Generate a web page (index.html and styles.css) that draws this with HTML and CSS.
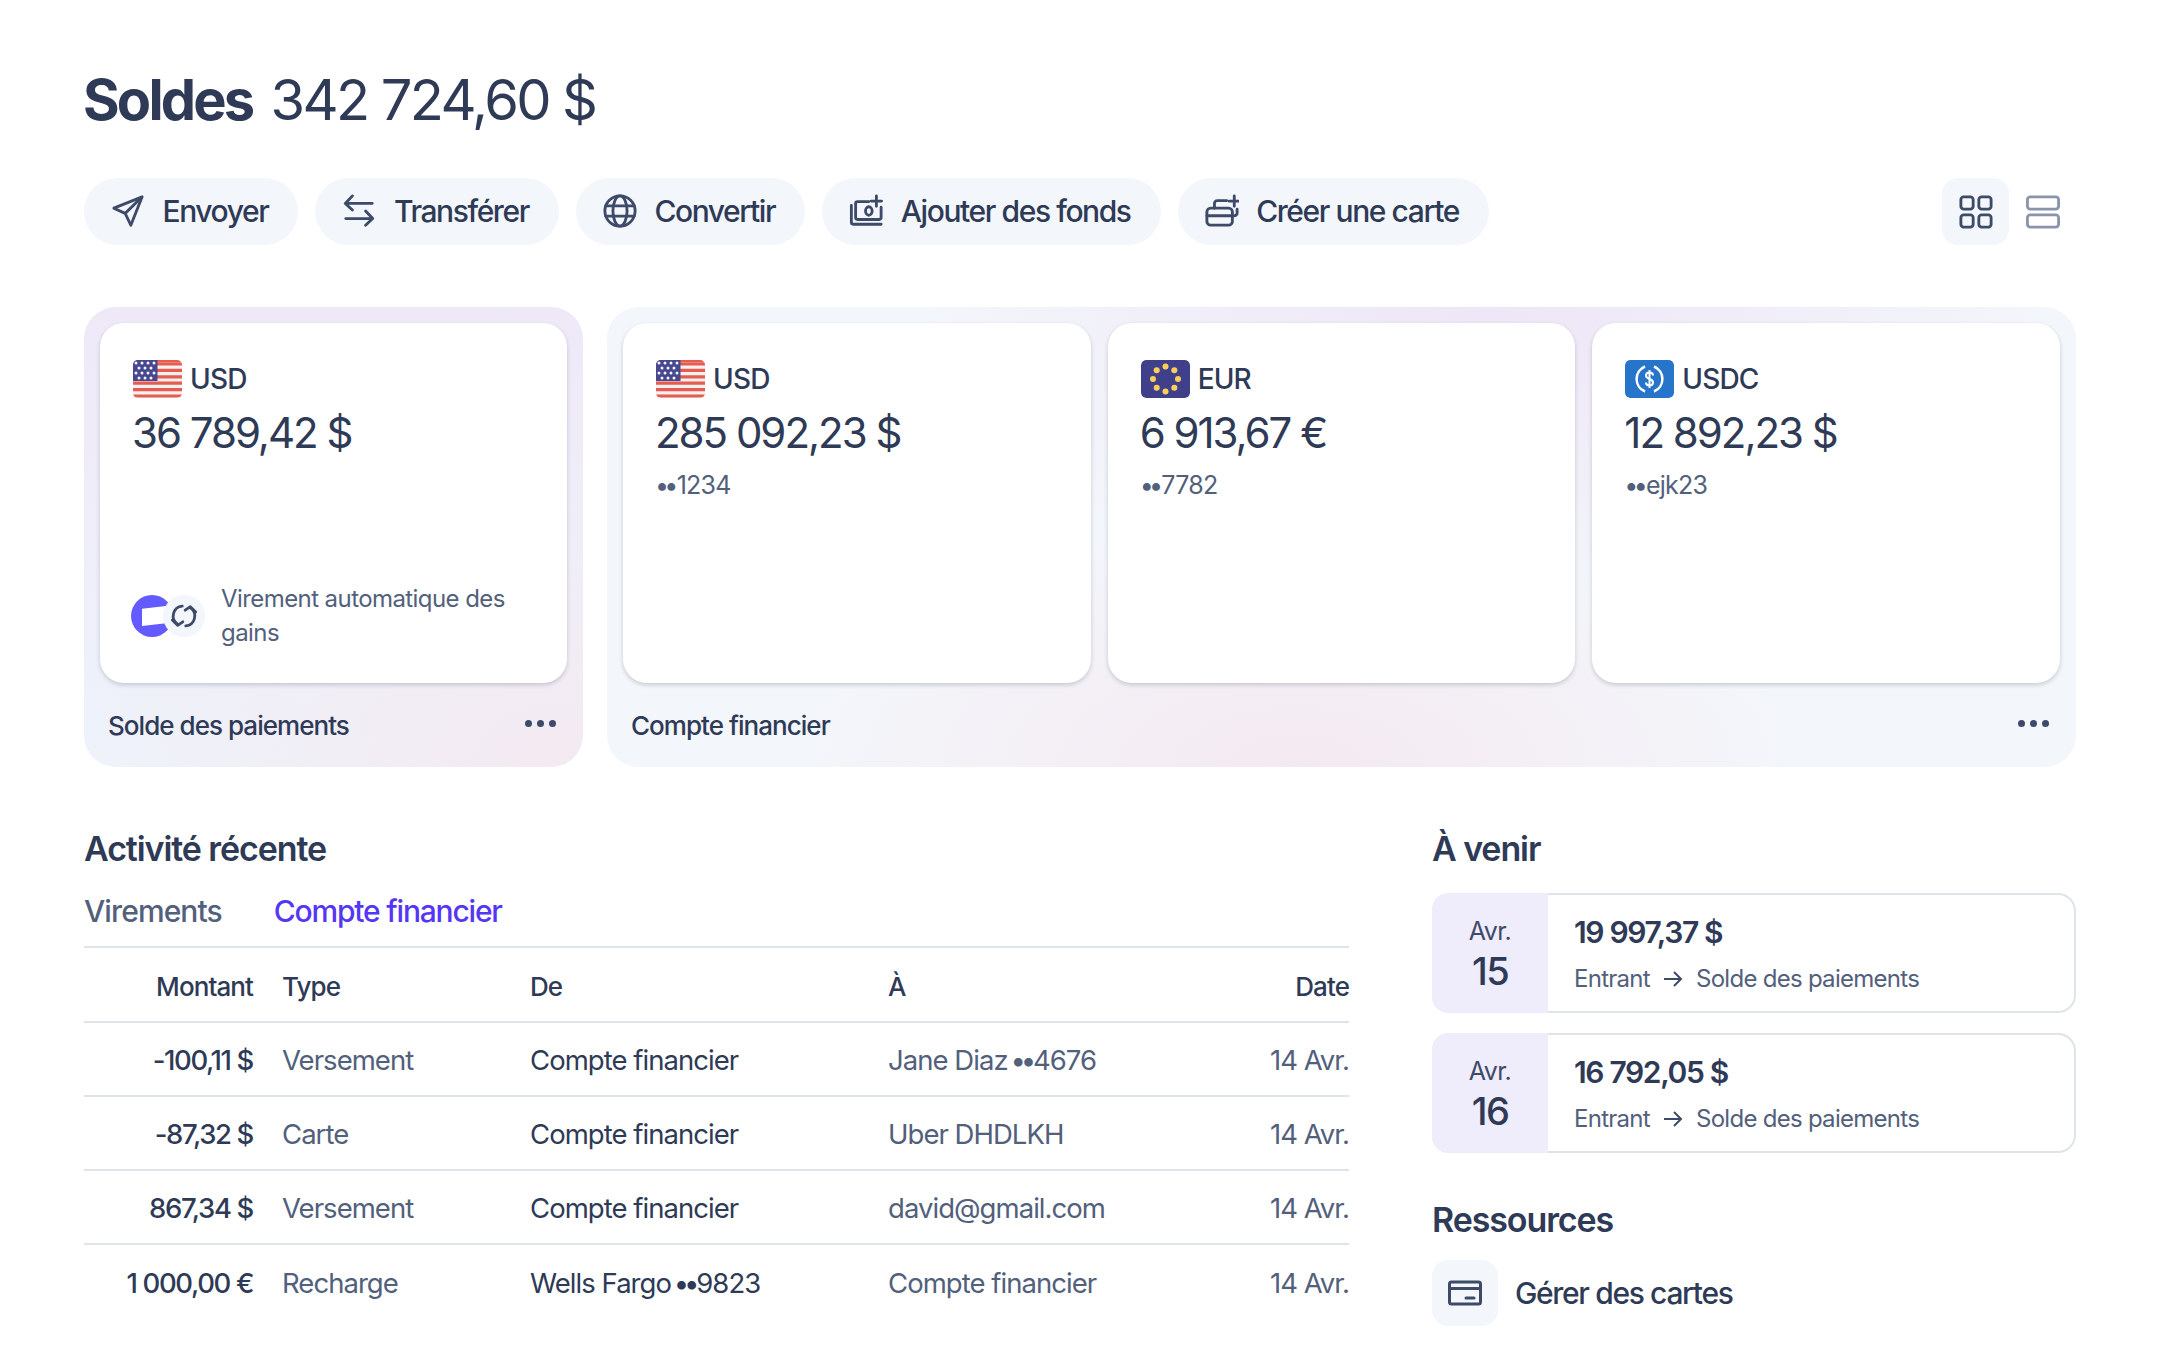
FILE: index.html
```html
<!DOCTYPE html>
<html lang="fr">
<head>
    <meta charset="UTF-8">
    <meta name="viewport" content="width=device-width, initial-scale=1.0">
    <title>Soldes</title>
    <link rel="stylesheet" href="styles.css">
</head>
<body>
    <svg class="sprites" width="0" height="0">
        <symbol id="flag-us" viewBox="0 0 49 38">
            <rect width="49" height="38" fill="#f1f1f3"/>
            <path d="M0 0h49v3.200H0zM0 6.400h49v3.200H0zM0 12.800h49v3.200H0zM0 19.200h49v3.200H0zM0 25.600h49v3.200H0zM0 32h49v3.200H0z" fill="#e85c50" transform="translate(0 2.400)"/>
            <path d="M0 0h49v2.400H0z" fill="#e85c50"/>
            <rect width="24.500" height="21" fill="#47478f"/>
            <g fill="#f4f4f8">
                <circle cx="3" cy="3" r="1.500"/><circle cx="9" cy="3" r="1.500"/><circle cx="15" cy="3" r="1.500"/><circle cx="21" cy="3" r="1.500"/>
                <circle cx="6" cy="8" r="1.500"/><circle cx="12" cy="8" r="1.500"/><circle cx="18" cy="8" r="1.500"/>
                <circle cx="3" cy="13" r="1.500"/><circle cx="9" cy="13" r="1.500"/><circle cx="15" cy="13" r="1.500"/><circle cx="21" cy="13" r="1.500"/>
                <circle cx="6" cy="18" r="1.500"/><circle cx="12" cy="18" r="1.500"/><circle cx="18" cy="18" r="1.500"/>
            </g>
        </symbol>
    </svg>

    <div class="page">
        <h1 class="title"><strong>Soldes</strong> <span>342 724,60 $</span></h1>

        <div class="toolbar">
            <button class="pill" type="button">
                <svg class="icon" viewBox="0 0 36 36"><path d="M33 3 3 15l12 5.500L21 33z M33 3 15 20.500"/></svg>
                Envoyer
            </button>
            <button class="pill" type="button">
                <svg class="icon" viewBox="0 0 36 36"><path d="M32 10H4M11 2 3.500 10l7.500 7M4 26h28M25 18l7.500 8-7.500 7"/></svg>
                Transférer
            </button>
            <button class="pill" type="button">
                <svg class="icon" viewBox="0 0 36 36"><circle cx="18" cy="18" r="16"/><ellipse cx="18" cy="18" rx="7.500" ry="16"/><path d="M3 12.500h30M3 23.500h30"/></svg>
                Convertir
            </button>
            <button class="pill" type="button">
                <svg class="icon" viewBox="0 0 36 36"><path d="M21 8H9a2 2 0 0 0-2 2v15a2 2 0 0 0 2 2h23a2 2 0 0 0 2-2V14"/><path d="M2.500 12v18a2 2 0 0 0 2 2H34"/><ellipse cx="21" cy="18" rx="3.500" ry="4.500"/><path d="M29 2v11M23.500 7.500h11"/></svg>
                Ajouter des fonds
            </button>
            <button class="pill" type="button">
                <svg class="icon" viewBox="0 0 36 36"><rect x="2" y="15" width="27" height="18" rx="4"/><path d="M2 23h27M10 15v-5a3 3 0 0 1 3-3h10M34 16v4a3 3 0 0 1-3 3M31 2v11M25.500 7.500h10"/></svg>
                Créer une carte
            </button>
            <div class="view-toggle">
                <button class="view-btn view-btn-active" type="button">
                    <svg class="icon" viewBox="0 0 36 36"><rect x="2" y="2" width="13" height="13" rx="3"/><rect x="21" y="2" width="13" height="13" rx="3"/><rect x="2" y="21" width="13" height="13" rx="3"/><rect x="21" y="21" width="13" height="13" rx="3"/></svg>
                </button>
                <button class="view-btn" type="button">
                    <svg class="icon icon-muted" viewBox="0 0 36 36"><rect x="1.500" y="2" width="33" height="13" rx="3"/><rect x="1.500" y="21" width="33" height="13" rx="3"/></svg>
                </button>
            </div>
        </div>

        <div class="balances">
            <section class="panel panel-payments">
                <div class="cards">
                    <div class="card">
                        <div class="currency">
                            <svg class="flag"><use href="#flag-us"/></svg>
                            USD
                        </div>
                        <div class="amount">36 789,42 $</div>
                        <div class="auto">
                            <div class="auto-icons">
                                <span class="brand"><span class="brand-mark"></span></span>
                                <span class="sync">
                                    <svg class="icon" viewBox="0 0 24 24"><path d="M10.500 3.500A8.500 8.500 0 0 0 6.500 19M2 15.500 6.500 20l4.500-3M13.500 20.500A8.500 8.500 0 0 0 17.500 5M22 8.500 17.500 4 13 7"/></svg>
                                </span>
                            </div>
                            <p>Virement automatique des gains</p>
                        </div>
                    </div>
                </div>
                <div class="panel-foot">
                    <span>Solde des paiements</span>
                    <span class="dots"><i></i><i></i><i></i></span>
                </div>
            </section>

            <section class="panel panel-financial">
                <div class="cards">
                    <div class="card">
                        <div class="currency">
                            <svg class="flag"><use href="#flag-us"/></svg>
                            USD
                        </div>
                        <div class="amount">285 092,23 $</div>
                        <div class="acct"><span class="mask">••</span>1234</div>
                    </div>
                    <div class="card">
                        <div class="currency">
                            <svg class="flag" viewBox="0 0 49 38">
                                <rect width="49" height="38" rx="5" fill="#40408a"/>
                                <g fill="#fbcf5a">
                                    <circle cx="24.500" cy="6.500" r="3"/><circle cx="33.300" cy="10.200" r="3"/><circle cx="37" cy="19" r="3"/><circle cx="33.300" cy="27.800" r="3"/>
                                    <circle cx="24.500" cy="31.500" r="3"/><circle cx="15.700" cy="27.800" r="3"/><circle cx="12" cy="19" r="3"/><circle cx="15.700" cy="10.200" r="3"/>
                                </g>
                            </svg>
                            EUR
                        </div>
                        <div class="amount">6 913,67 €</div>
                        <div class="acct"><span class="mask">••</span>7782</div>
                    </div>
                    <div class="card">
                        <div class="currency">
                            <svg class="flag" viewBox="0 0 49 38">
                                <rect width="49" height="38" rx="5" fill="#2775ca"/>
                                <path d="M20 6.500a13.500 13.500 0 0 0 0 25M29 6.500a13.500 13.500 0 0 1 0 25" fill="none" stroke="#fff" stroke-width="2.500"/>
                                <path d="M28 15.500c0-2-1.500-3-3.500-3s-3.500 1-3.500 3 1.500 2.800 3.500 3.500 3.500 1.500 3.500 3.500-1.500 3-3.500 3-3.500-1-3.500-3M24.500 10v18" fill="none" stroke="#fff" stroke-width="2"/>
                            </svg>
                            USDC
                        </div>
                        <div class="amount">12 892,23 $</div>
                        <div class="acct"><span class="mask">••</span>ejk23</div>
                    </div>
                </div>
                <div class="panel-foot">
                    <span>Compte financier</span>
                    <span class="dots"><i></i><i></i><i></i></span>
                </div>
            </section>
        </div>

        <div class="lower">
            <section class="activity">
                <h2>Activité récente</h2>
                <div class="tabs">
                    <span class="tab">Virements</span>
                    <span class="tab tab-active">Compte financier</span>
                </div>
                <table>
                    <thead>
                        <tr>
                            <th class="col-amount">Montant</th>
                            <th class="col-type">Type</th>
                            <th class="col-from">De</th>
                            <th class="col-to">À</th>
                            <th class="col-date">Date</th>
                        </tr>
                    </thead>
                    <tbody>
                        <tr>
                            <td class="col-amount">-100,11 $</td>
                            <td class="col-type">Versement</td>
                            <td class="col-from">Compte financier</td>
                            <td class="col-to">Jane Diaz <span class="mask">••</span>4676</td>
                            <td class="col-date">14 Avr.</td>
                        </tr>
                        <tr>
                            <td class="col-amount">-87,32 $</td>
                            <td class="col-type">Carte</td>
                            <td class="col-from">Compte financier</td>
                            <td class="col-to">Uber DHDLKH</td>
                            <td class="col-date">14 Avr.</td>
                        </tr>
                        <tr>
                            <td class="col-amount">867,34 $</td>
                            <td class="col-type">Versement</td>
                            <td class="col-from">Compte financier</td>
                            <td class="col-to">david@gmail.com</td>
                            <td class="col-date">14 Avr.</td>
                        </tr>
                        <tr>
                            <td class="col-amount">1 000,00 €</td>
                            <td class="col-type">Recharge</td>
                            <td class="col-from">Wells Fargo <span class="mask">••</span>9823</td>
                            <td class="col-to">Compte financier</td>
                            <td class="col-date">14 Avr.</td>
                        </tr>
                    </tbody>
                </table>
            </section>

            <aside class="side">
                <h2>À venir</h2>
                <div class="upcoming">
                    <div class="event">
                        <div class="event-date"><span>Avr.</span><b>15</b></div>
                        <div class="event-body">
                            <div class="event-amount">19 997,37 $</div>
                            <div class="event-route">
                                Entrant
                                <svg class="arrow" viewBox="0 0 20 20"><path d="M1 10h17M11 3l7 7-7 7"/></svg>
                                Solde des paiements
                            </div>
                        </div>
                    </div>
                    <div class="event">
                        <div class="event-date"><span>Avr.</span><b>16</b></div>
                        <div class="event-body">
                            <div class="event-amount">16 792,05 $</div>
                            <div class="event-route">
                                Entrant
                                <svg class="arrow" viewBox="0 0 20 20"><path d="M1 10h17M11 3l7 7-7 7"/></svg>
                                Solde des paiements
                            </div>
                        </div>
                    </div>
                </div>
                <h2 class="res-title">Ressources</h2>
                <div class="resource">
                    <span class="res-icon">
                        <svg class="icon" viewBox="0 0 34 34"><rect x="1.500" y="6" width="31" height="22" rx="2"/><path d="M1.500 12.500h31M18 22h8"/></svg>
                    </span>
                    Gérer des cartes
                </div>
            </aside>
        </div>
    </div>
</body>
</html>
```

FILE: styles.css
```css
* {
    box-sizing: border-box;
}

body {
    margin: 0;
    background: #fff;
    color: #2e3a56;
    font-family: Inter, "Liberation Sans", sans-serif;
}

.sprites {
    position: absolute;
}

.page {
    padding: 64px 84px 0;
}

.title {
    margin: 0 0 0 -1px;
    font-size: 56px;
    line-height: 72px;
    font-weight: 400;
    letter-spacing: -0.047em;
}

.title strong {
    font-weight: 700;
    letter-spacing: -0.05em;
    margin-right: 5px;
}

.toolbar {
    display: flex;
    gap: 17px;
    margin-top: 42px;
}

.pill {
    display: flex;
    align-items: center;
    gap: 17.500px;
    height: 67px;
    padding: 0 30px 2px 27px;
    border: none;
    border-radius: 34px;
    background: #f3f6fa;
    color: #2e3a56;
    font-family: inherit;
    font-size: 30px;
    font-weight: 500;
    letter-spacing: -0.047em;
}

.icon {
    width: 34px;
    height: 34px;
    fill: none;
    stroke: #3d4a68;
    stroke-width: 3;
    stroke-linejoin: round;
    stroke-linecap: round;
    flex: none;
}

.icon-muted {
    stroke: #8a94ab;
}

.view-toggle {
    display: flex;
    margin-left: auto;
}

.view-btn {
    display: flex;
    align-items: center;
    justify-content: center;
    width: 67px;
    height: 67px;
    padding: 0;
    border: none;
    border-radius: 16px;
    background: none;
}

.view-btn-active {
    background: #f3f6fa;
}

.balances {
    display: flex;
    gap: 24px;
    margin-top: 62px;
}

.panel {
    height: 460px;
    padding: 16px;
    border-radius: 32px;
}

.panel-payments {
    width: 499px;
    flex: none;
    background:
        radial-gradient(ellipse 500px 260px at 100% 100%, #f4e9f1 0%, rgba(244, 233, 241, 0) 100%),
        linear-gradient(180deg, #efe9f7 0%, #eef3fa 100%);
}

.panel-financial {
    flex: 1;
    background:
        radial-gradient(ellipse 500px 240px at 47% 100%, #f4e9f1 0%, rgba(244, 233, 241, 0) 100%),
        radial-gradient(ellipse 560px 300px at 60% 0%, #eee6f6 0%, rgba(238, 230, 246, 0) 100%),
        #f3f6fa;
}

.cards {
    display: flex;
    gap: 17px;
}

.card {
    flex: 1;
    display: flex;
    flex-direction: column;
    height: 360px;
    padding: 37px 33px 0;
    border-radius: 24px;
    background: #fff;
    box-shadow: 0 2px 4px rgba(46, 58, 86, 0.22);
}

.currency {
    display: flex;
    align-items: center;
    gap: 8px;
    font-size: 28px;
    line-height: 38px;
    font-weight: 500;
    letter-spacing: -0.03em;
}

.flag {
    width: 49px;
    height: 38px;
    border-radius: 5px;
    flex: none;
}

.amount {
    margin: 9px 0 0 -1px;
    font-size: 42px;
    line-height: 52px;
    letter-spacing: -0.048em;
}

.acct {
    margin-top: 9px;
    margin-left: -1px;
    font-size: 25px;
    line-height: 34px;
    color: #52607c;
    letter-spacing: -0.03em;
}

.mask {
    letter-spacing: -0.19em;
    margin-right: 3px;
}

td .mask {
    margin-left: -4px;
    margin-right: 2px;
}

.auto {
    display: flex;
    align-items: center;
    gap: 16px;
    margin-top: auto;
    margin-bottom: 33px;
    margin-left: -2px;
}

.auto p {
    margin: 0;
    font-size: 24px;
    line-height: 34px;
    color: #52607c;
    letter-spacing: -0.024em;
}

.auto-icons {
    display: flex;
    flex: none;
}

.brand {
    display: flex;
    align-items: center;
    justify-content: center;
    width: 42px;
    height: 42px;
    border-radius: 50%;
    background: #635bff;
}

.brand-mark {
    width: 24px;
    height: 20px;
    margin-left: 4px;
    background: #fff;
    clip-path: polygon(0 14%, 100% 0, 100% 86%, 0 100%);
}

.sync {
    display: flex;
    align-items: center;
    justify-content: center;
    width: 42px;
    height: 42px;
    margin-left: -10px;
    border-radius: 50%;
    background: #f3f6fa;
    z-index: 1;
}

.sync .icon {
    width: 28px;
    height: 28px;
    stroke-width: 2.400;
}

.panel-foot {
    display: flex;
    align-items: center;
    justify-content: space-between;
    padding: 0 11px 0 8px;
    margin-top: 25px;
    font-size: 26px;
    line-height: 36px;
    font-weight: 500;
    letter-spacing: -0.037em;
}

.dots {
    display: flex;
    gap: 5px;
    margin-top: -6px;
}

.dots i {
    width: 7px;
    height: 7px;
    border-radius: 50%;
    background: #3d4a68;
}

.lower {
    display: flex;
    margin-top: 58px;
}

h2 {
    margin: 0;
    font-size: 34px;
    line-height: 48px;
    font-weight: 600;
    letter-spacing: -0.032em;
}

.activity {
    width: 1265px;
    flex: none;
}

.tabs {
    display: flex;
    gap: 52px;
    margin-top: 18px;
    padding-bottom: 15px;
    font-size: 30px;
    line-height: 40px;
    font-weight: 500;
    letter-spacing: -0.03em;
    border-bottom: 2px solid #dfe4ea;
}

.tab {
    color: #52607c;
}

.tab-active {
    color: #5536f5;
    letter-spacing: -0.04em;
}

table {
    width: 100%;
    border-collapse: collapse;
    table-layout: fixed;
    font-size: 27.500px;
    letter-spacing: -0.035em;
}

th {
    height: 74px;
    padding: 4px 0 0;
    font-weight: 500;
    text-align: left;
    font-size: 26px;
    letter-spacing: -0.035em;
}

td {
    height: 74px;
    padding: 2px 0 0;
    color: #52607c;
}

tr {
    border-bottom: 2px solid #dfe4ea;
}

tbody tr:last-child {
    border-bottom: none;
}

.col-amount {
    width: 198px;
    padding-right: 29px;
    text-align: right;
}

td.col-amount {
    color: #2e3a56;
    font-weight: 500;
    letter-spacing: -0.05em;
}

.col-type {
    width: 248px;
}

.col-from {
    width: 358px;
}

td.col-from {
    color: #2e3a56;
}

.col-date {
    width: 160px;
    text-align: right;
}

.side {
    margin-left: 83px;
    flex: 1;
}

.upcoming {
    display: flex;
    flex-direction: column;
    gap: 20px;
    margin-top: 20px;
}

.event {
    display: flex;
    height: 120px;
}

.event-date {
    display: flex;
    flex-direction: column;
    align-items: center;
    width: 116px;
    padding-top: 21px;
    flex: none;
    background: #efecfb;
    border-radius: 16px 0 0 16px;
}

.event-date span {
    font-size: 25px;
    line-height: 34px;
    color: #3d4a68;
    letter-spacing: -0.02em;
}

.event-date b {
    font-size: 38px;
    line-height: 46px;
    font-weight: 500;
    letter-spacing: -0.04em;
}

.event-body {
    flex: 1;
    padding: 17px 0 0 26px;
    border: 2px solid #dfe4ea;
    border-left: none;
    border-radius: 0 18px 18px 0;
}

.event-amount {
    font-size: 30px;
    line-height: 40px;
    font-weight: 600;
    letter-spacing: -0.045em;
}

.event-route {
    display: flex;
    align-items: center;
    gap: 13px;
    margin-top: 10px;
    font-size: 24px;
    line-height: 34px;
    color: #52607c;
    letter-spacing: -0.03em;
}

.arrow {
    width: 20px;
    height: 20px;
    fill: none;
    stroke: #3d4a68;
    stroke-width: 2;
}

.res-title {
    margin-top: 43px;
}

.resource {
    display: flex;
    align-items: center;
    gap: 17px;
    margin-top: 16px;
    font-size: 30px;
    font-weight: 500;
    letter-spacing: -0.045em;
}

.res-icon {
    display: flex;
    align-items: center;
    justify-content: center;
    width: 66px;
    height: 66px;
    border-radius: 16px;
    background: #f3f6fa;
}
```
